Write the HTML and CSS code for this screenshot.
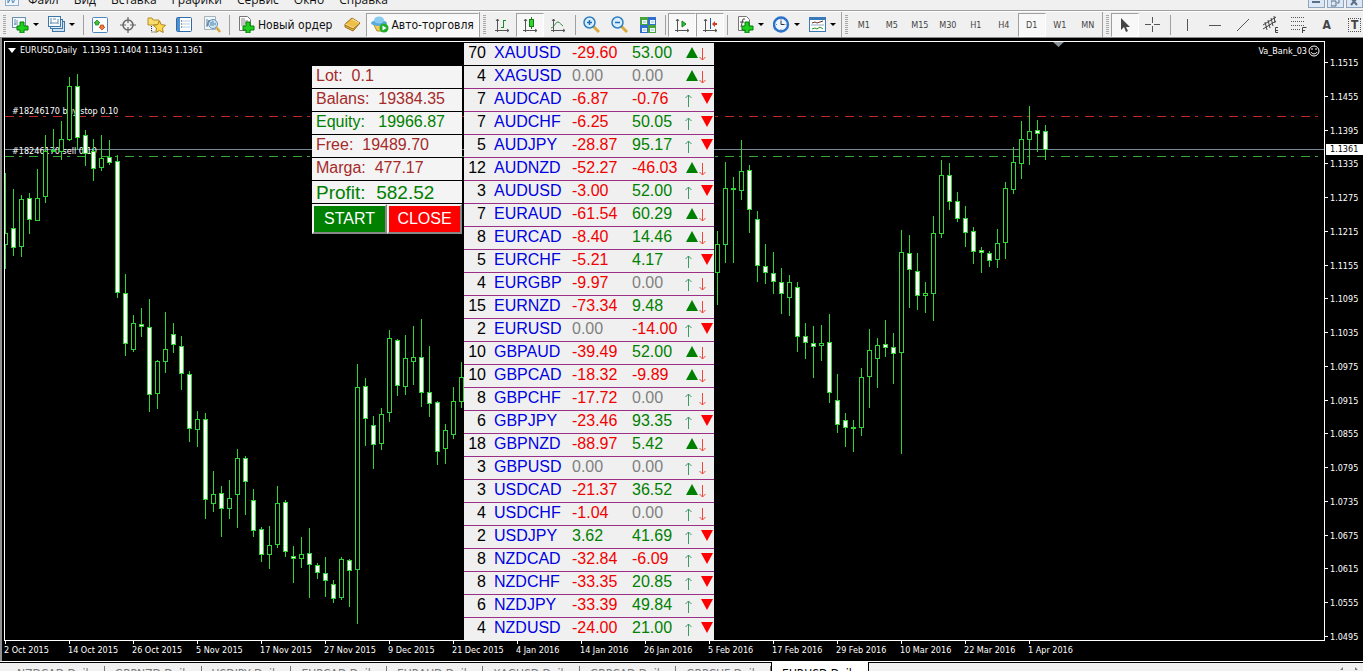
FILE: index.html
```html
<!DOCTYPE html>
<html lang="ru">
<head>
<meta charset="utf-8">
<title>EURUSD,Daily</title>
<link rel="stylesheet" href="styles.css">
</head>
<body>
<header class="menubar">
  <svg class="app-icon" width="14" height="12" viewBox="0 0 14 12"><rect x=".5" y=".5" width="13" height="11" fill="#eef5fc" stroke="#8fb0cf"/><path d="M3 3v6l3-5 2 5 3-6" fill="none" stroke="#4f86b8"/></svg>
  <nav class="menu">
    <button>Файл</button><button>Вид</button><button>Вставка</button><button>Графики</button><button>Сервис</button><button>Окно</button><button>Справка</button>
  </nav>
  <div class="win-buttons">
    <button aria-label="Свернуть"><svg width="9" height="8"><path d="M0 3h8" stroke="#5d6f86" stroke-width="2"/></svg></button>
    <button aria-label="Восстановить"><svg width="9" height="8"><path d="M3 0h5v4H6M0 2h5v5H0z" fill="none" stroke="#5d6f86"/></svg></button>
    <button aria-label="Закрыть"><svg width="9" height="8"><path d="M1-1l6 7M7-1L1 6" stroke="#5d6f86" stroke-width="2"/></svg></button>
  </div>
</header>

<div class="toolbar">
  <div class="group">
    <i class="grip"></i>
    <button class="tool drop" aria-label="Новый график"><svg width="17" height="17" viewBox="0 0 17 17"><rect x=".5" y="1.500" width="13" height="10" fill="#f4f9fd" stroke="#6a8ead"/><path d="M3 3v6M5 4v3M2 8h4" stroke="#6a8ead"/><path d="M8 6h4v4h4v4h-4v3H8v-3H5v-4h3z" fill="#1fd01f" stroke="#067a06"/></svg><i class="caret"></i></button>
    <button class="tool drop" aria-label="Профили"><svg width="17" height="17" viewBox="0 0 17 17"><rect x="4.500" y="5.500" width="12" height="10" fill="#cfe2f3" stroke="#3d76a8"/><rect x="2.500" y="3.500" width="12" height="9" fill="#dfecf8" stroke="#3d76a8"/><rect x=".5" y=".5" width="12" height="10" fill="#f7fbff" stroke="#3d76a8"/><path d="M3 2v6M2 7h8M10 3v5M5 3h3" stroke="#6a8ead"/></svg><i class="caret"></i></button>
    <i class="sep"></i>
    <button class="tool" aria-label="Обзор рынка"><svg width="16" height="16" viewBox="0 0 16 16"><rect x=".5" y=".5" width="15" height="15" rx="1" fill="#fff" stroke="#4a87bd"/><path d="M5 3l3 3H6.500v2h-3V6H2z" fill="#3ec43e" stroke="#118011" stroke-width=".7"/><path d="M10 13l3-3h-1.500V8h-3v2H7z" fill="#f08040" stroke="#b03a10" stroke-width=".7"/></svg></button>
    <button class="tool" aria-label="Окно данных"><svg width="16" height="16" viewBox="0 0 16 16"><circle cx="8" cy="8" r="5" fill="none" stroke="#666" stroke-width="1.500"/><path d="M8 0v6M8 10v6M0 8h6M10 8h6" stroke="#666" stroke-width="1.200"/></svg></button>
    <button class="tool" aria-label="Навигатор"><svg width="19" height="17" viewBox="0 0 19 17"><path d="M1 2h4l1 2h6v5H1z" fill="#f8dc6c" stroke="#b7922a"/><path d="M4.500 10v6h4" fill="none" stroke="#333" stroke-dasharray="1 1"/><path d="M12.500 5l1.800 3.700 4.200.5-3 3 .7 4.300-3.700-2-3.700 2 .7-4.300-3-3 4.200-.5z" fill="#ffd94a" stroke="#a9801f"/></svg></button>
    <button class="tool" aria-label="Терминал"><svg width="16" height="15" viewBox="0 0 16 15"><rect x=".5" y=".5" width="15" height="14" rx="1" fill="#fff" stroke="#2d6ba8"/><rect x="1" y="1" width="3" height="13" fill="#4d8fd1"/><path d="M6 4h8M6 7h8M6 10h8" stroke="#b8cde0"/><path d="M5 4h1M5 7h1M5 10h1" stroke="#234"/></svg></button>
    <button class="tool" aria-label="Тестер"><svg width="17" height="17" viewBox="0 0 17 17"><path d="M.5.5h11v13H.5z" fill="#f2f6f9" stroke="#a5b3bf"/><path d="M3 3v8M3 10l2-6 2 3 2-4" fill="none" stroke="#5e7f9b"/><circle cx="9" cy="8" r="4.500" fill="#cde6f7" fill-opacity=".8" stroke="#5a93bd"/><path d="M7 6v4M9 5v5M11 7v2" stroke="#4c7ca2"/><path d="M12.500 11.500L16 16" stroke="#d9a63a" stroke-width="2.500"/></svg></button>
    <i class="sep"></i>
    <button class="tool wide"><svg width="17" height="17" viewBox="0 0 17 17"><path d="M1.500.5h8l3 3v11h-11z" fill="#fff" stroke="#777"/><path d="M3 3h4M3 5h7M3 7h7M3 9h4" stroke="#888"/><path d="M8 6h4v4h4v4h-4v3H8v-3H5v-4h3z" fill="#1fd01f" stroke="#067a06"/></svg>Новый ордер</button>
    <button class="tool" aria-label="Редактор"><svg width="17" height="15" viewBox="0 0 17 15"><path d="M1 7l7-6 8 5-7 8-8-4z" fill="#eebf45" stroke="#9c6a10"/><path d="M1 7l8 4 7-5M8 2l7 4" fill="none" stroke="#fbe7a0"/><path d="M1 8l8 4 7-6" fill="none" stroke="#9c6a10"/></svg></button>
    <button class="tool wide auto pressed"><svg width="18" height="17" viewBox="0 0 18 17"><path d="M2 7h13l-4 8H6z" fill="#f3ce55" stroke="#b38b24"/><ellipse cx="8" cy="7" rx="8" ry="3" fill="#5aaade"/><ellipse cx="8" cy="4" rx="5" ry="3.500" fill="#8acbf0"/><circle cx="13" cy="12" r="4.500" fill="#1fae2c"/><path d="M11.500 9.500l4 2.500-4 2.500z" fill="#fff"/></svg>Авто-торговля</button>
  </div>
  <div class="group">
    <i class="grip"></i>
    <button class="tool" aria-label="Бары"><svg width="16" height="16" viewBox="0 0 16 16"><path d="M3.500 2v13M1 13.500h14M2 4l1.500-2L5 4M13 12l2 1.500-2 1.500" fill="none" stroke="#555"/><path d="M9.500 3v8M7 10.500h2M10 3.500h2" fill="none" stroke="#1c8a2c"/></svg></button>
    <button class="tool pressed" aria-label="Свечи"><svg width="16" height="16" viewBox="0 0 16 16"><path d="M3.500 2v13M1 13.500h14M2 4l1.500-2L5 4M13 12l2 1.500-2 1.500" fill="none" stroke="#555"/><path d="M9.500 0v12" stroke="#187a18"/><rect x="7.500" y="2.500" width="4" height="7" fill="#2fd72f" stroke="#187a18"/></svg></button>
    <button class="tool" aria-label="Линия"><svg width="16" height="16" viewBox="0 0 16 16"><path d="M3.500 2v13M1 13.500h14M2 4l1.500-2L5 4M13 12l2 1.500-2 1.500" fill="none" stroke="#555"/><path d="M1 11c4-1 4-6 7-6 2 0 3 3 5 4" fill="none" stroke="#2c8a3c"/></svg></button>
    <i class="sep"></i>
    <button class="tool" aria-label="Увеличить"><svg width="17" height="17" viewBox="0 0 17 17"><path d="M10 10l6 6" stroke="#d8ab3e" stroke-width="3"/><circle cx="6.500" cy="6.500" r="5.500" fill="#d9efff" stroke="#2f7fc0" stroke-width="1.500"/><path d="M4 6.500h5M6.500 4v5" stroke="#1f6bb0" stroke-width="1.500"/></svg></button>
    <button class="tool" aria-label="Уменьшить"><svg width="17" height="17" viewBox="0 0 17 17"><path d="M10 10l6 6" stroke="#d8ab3e" stroke-width="3"/><circle cx="6.500" cy="6.500" r="5.500" fill="#d9efff" stroke="#2f7fc0" stroke-width="1.500"/><path d="M4 6.500h5" stroke="#1f6bb0" stroke-width="1.500"/></svg></button>
    <button class="tool" aria-label="Окна"><svg width="16" height="16" viewBox="0 0 16 16"><path d="M0 0h8v8H0zM8 8h8v8H8z" fill="#49a33b"/><path d="M8 0h8v8H8zM0 8h8v8H0z" fill="#2f6fd0"/><path d="M2 3h5v4H2zM10 3h5v4h-5zM2 11h5v4H2zM10 11h5v4h-5z" fill="#eef6ff"/><path d="M3 5h3M11 5h3M3 13h3M11 13h3" stroke="#9bb"/></svg></button>
    <i class="sep"></i>
    <button class="tool pressed" aria-label="Автопрокрутка"><svg width="16" height="16" viewBox="0 0 16 16"><path d="M3.500 2v13M1 13.500h14M2 4l1.500-2L5 4M13 12l2 1.500-2 1.500" fill="none" stroke="#555"/><path d="M8 4l4 3-4 3z" fill="#2fc72f" stroke="#187a18"/></svg></button>
    <button class="tool pressed" aria-label="Сдвиг графика"><svg width="16" height="16" viewBox="0 0 16 16"><path d="M3.500 2v13M1 13.500h14M2 4l1.500-2L5 4M13 12l2 1.500-2 1.500" fill="none" stroke="#555"/><path d="M8.500 1v11" stroke="#225a9a"/><path d="M10 7l3-3v2h2v2h-2v2z" fill="#d33a1c"/></svg></button>
    <i class="sep"></i>
    <button class="tool drop inset" aria-label="Индикаторы"><svg width="17" height="17" viewBox="0 0 17 17"><path d="M1.500.5h8l3 3v11h-11z" fill="#fff" stroke="#777"/><path d="M8 3H6L4 11M3 6h4M8 6l2 3" fill="none" stroke="#444"/><path d="M8 6h4v4h4v4h-4v3H8v-3H5v-4h3z" fill="#1fd01f" stroke="#067a06"/></svg><i class="caret"></i></button>
    <button class="tool drop" aria-label="Периоды"><svg width="17" height="17" viewBox="0 0 17 17"><circle cx="8" cy="8.500" r="7" fill="#eef7ff" stroke="#2c72c8" stroke-width="2.400"/><path d="M8 4.500v4h3.500" fill="none" stroke="#333"/><path d="M8 3v1M8 13v1M3 8.500h1M12.500 8.500h1" stroke="#68a"/></svg><i class="caret"></i></button>
    <button class="tool drop" aria-label="Шаблоны"><svg width="17" height="16" viewBox="0 0 17 16"><rect x=".5" y=".5" width="16" height="14" fill="#fff" stroke="#3a7ab8"/><path d="M1 2h15" stroke="#3a7ab8" stroke-width="2"/><path d="M2 8h13" stroke="#9ab"/><path d="M3 6l3-1 2 1 3-1 3-1" fill="none" stroke="#633"/><path d="M3 12l3-1 2 1 3-2 3 2" fill="none" stroke="#292"/></svg><i class="caret"></i></button>
  </div>
  <div class="group">
    <i class="grip"></i>
    <button class="tool">M1</button><button class="tool">M5</button><button class="tool">M15</button><button class="tool">M30</button><button class="tool">H1</button><button class="tool">H4</button><button class="tool pressed">D1</button><button class="tool">W1</button><button class="tool">MN</button>
  </div>
  <div class="group last">
    <i class="grip"></i>
    <button class="tool pressed" aria-label="Курсор"><svg width="16" height="16" viewBox="0 0 16 16"><path d="M4 1v12l3-3 2 5 2-1-2-4h4z" fill="#444"/></svg></button>
    <button class="tool" aria-label="Перекрестие"><svg width="16" height="16" viewBox="0 0 16 16"><path d="M7.500 0v6M7.500 9v6M0 7.500h6M9 7.500h6" stroke="#555"/></svg></button>
    <i class="sep"></i>
    <button class="tool" aria-label="Вертикальная линия"><svg width="16" height="16" viewBox="0 0 16 16"><path d="M8.500 2v12" stroke="#555"/></svg></button>
    <button class="tool" aria-label="Горизонтальная линия"><svg width="16" height="16" viewBox="0 0 16 16"><path d="M2 8.500h12" stroke="#555"/></svg></button>
    <button class="tool" aria-label="Трендовая линия"><svg width="16" height="16" viewBox="0 0 16 16"><path d="M2 14L14 2" stroke="#555"/></svg></button>
    <button class="tool" aria-label="Канал"><svg width="18" height="18" viewBox="0 0 18 18"><path d="M1 9L14 1M1 13L14 5M3 6l2 8M6 4l2 8M9 2l2 8M12 0l1 7" stroke="#444"/><path d="M16 11.500h-2.500v5H16M13 14.500h3" fill="none" stroke="#444"/></svg></button>
    <button class="tool" aria-label="Фибоначчи"><svg width="18" height="18" viewBox="0 0 18 18"><path d="M1 1.500h14M1 5.500h14M1 9.500h14M1 13.500h9" stroke="#555" stroke-dasharray="1 1"/><path d="M12.500 17v-5.500h4M12 14.500h3" fill="none" stroke="#444"/></svg></button>
    <button class="tool letter">A</button>
    <button class="tool letter boxed"><span>T</span></button>
  </div>
</div>

<main class="chart">
  <section class="plot">
    <svg class="candles" id="candles" width="100%" height="100%" aria-label="EURUSD"></svg>
    <h1 class="symbol"><svg width="8" height="5"><path d="M0 0h8L4 5z" fill="#fff"/></svg>EURUSD,Daily&nbsp; 1.1393 1.1404 1.1343 1.1361</h1>
    <div class="expert">Va_Bank_03<svg width="12" height="12" viewBox="0 0 12 12"><circle cx="6" cy="6" r="5" fill="none" stroke="#fff"/><path d="M4 3v2M8 3v2M3 7c1 2.500 5 2.500 6 0" fill="none" stroke="#fff"/></svg></div>
    <div class="account">
      <p>Lot:  0.1</p>
      <p>Balans:  19384.35</p>
      <p class="up">Equity:   19966.87</p>
      <p>Free:  19489.70</p>
      <p>Marga:  477.17</p>
      <p class="up profit">Profit:  582.52</p>
      <div class="actions"><button class="start">START</button><button class="close">CLOSE</button></div>
    </div>
    <table class="pairs"><tbody id="pairs"></tbody></table>
  </section>
  <aside class="prices" id="prices"><output class="current">1.1361</output></aside>
  <div class="dates" id="dates"></div>
</main>

<footer class="tabs">
  <button>NZDCAD,Daily</button><button>GBPNZD,Daily</button><button>USDJPY,Daily</button><button>EURCAD,Daily</button><button>EURAUD,Daily</button><button>XAGUSD,Daily</button><button>GBPCAD,Daily</button><button>GBPCHF,Daily</button><button class="active">EURUSD,Daily</button>
  <svg class="scroll" width="28" height="8"><path d="M8 5v3l-3 0zM20 5v3h3z" fill="#777"/></svg>
</footer>
<script src="script.js"></script>
</body>
</html>
```
FILE: styles.css
```css
* { box-sizing: border-box; }
body {
  margin: 0;
  height: 100vh;
  display: flex;
  flex-direction: column;
  overflow: hidden;
  background: #f0f0f0;
  font-family: "DejaVu Sans Condensed", "DejaVu Sans", sans-serif;
  font-size: 9px;
}
button {
  margin: 0;
  padding: 0;
  border: 0;
  background: none;
  font: inherit;
  color: inherit;
}
svg { display: block; flex: none; }

/* menu */
.menubar {
  height: 11px;
  display: flex;
  align-items: flex-end;
  overflow: hidden;
  border-bottom: 1px solid #a0a0a0;
  font-family: "Open Sans", sans-serif;
  font-size: 12px;
  line-height: 16px;
  color: #111;
}
.app-icon { margin: 0 9px 4px 5px; }
.menu {
  display: flex;
  gap: 15px;
  padding-bottom: 2px;
}
.win-buttons {
  display: flex;
  gap: 2px;
  margin-left: auto;
  padding-bottom: 2px;
}
.win-buttons button {
  width: 17px;
  height: 14px;
  display: flex;
  justify-content: center;
  align-items: flex-end;
  border: 1px solid #8ea3bd;
  background: #dce8f5;
}

/* toolbar */
.toolbar {
  height: 27px;
  flex: none;
  display: flex;
  border-top: 1px solid #fff;
  border-bottom: 1px solid #8a8a8a;
  color: #444;
}
.group {
  flex: none;
  display: flex;
  align-items: center;
  border-right: 1px solid #a0a0a0;
}
.group.last { border-right: 0; }
.grip {
  width: 3px;
  height: 20px;
  margin: 0 2px 0 3px;
  background: repeating-linear-gradient(#a8a8a8 0 1px, #f0f0f0 1px 2px);
}
.sep {
  width: 1px;
  height: 20px;
  margin: 0 2px 0 3px;
  background: #a0a0a0;
}
.tool {
  width: 28px;
  height: 24px;
  display: flex;
  align-items: center;
  justify-content: center;
  border: 1px solid transparent;
}
.tool.drop {
  width: 36px;
  justify-content: flex-start;
  gap: 4px;
  padding-left: 3px;
}
.tool.inset { margin-left: 3px; }
.tool.wide {
  width: auto;
  gap: 3px;
  padding: 0 5px;
  font-size: 12px;
  color: #111;
}
.tool.auto {
  gap: 2px;
  padding: 0 4px;
}
.tool.pressed {
  border-color: #a0a0a0 #fff #fff #a0a0a0;
  background: #f8f8f8;
}
.caret {
  border: 3px solid transparent;
  border-top-color: #000;
  border-bottom: 0;
}
.letter { font-size: 12px; font-weight: bold; }
.boxed span {
  padding: 0 2px;
  border: 1px dotted #555;
  line-height: 12px;
}

/* chart window */
.chart {
  flex: 1;
  min-height: 0;
  display: grid;
  grid-template-columns: 1fr 38px;
  grid-template-rows: 1fr 20px;
  padding-top: 3px;
  border-left: 2px solid #909090;
  padding-left: 2px;
  background: #000;
  color: #fff;
}
.plot {
  position: relative;
  border: 1px solid #fff;
  overflow: hidden;
}
.candles text { font-size: 9px; fill: #fff; }
.symbol {
  position: absolute;
  left: 3px;
  top: 2px;
  margin: 0;
  display: flex;
  align-items: center;
  gap: 4px;
  font-size: 9px;
  font-weight: normal;
  line-height: 12px;
}
.expert {
  position: absolute;
  right: 4px;
  top: 3px;
  display: flex;
  align-items: center;
  gap: 1px;
  line-height: 12px;
}

/* account panel */
.account {
  position: absolute;
  left: 307px;
  top: 24px;
  width: 150px;
  font: 16px/20px "Liberation Sans", Arial, sans-serif;
  color: #a52a2a;
}
.account p {
  height: 23px;
  margin: 0;
  padding-left: 4px;
  border-bottom: 1px solid #000;
  background: #f4f4f4;
  white-space: pre;
}
.account .up { color: #008000; }
.account .profit { font-size: 19px; line-height: 24px; }
.actions { display: flex; }
.actions button {
  flex: 1;
  height: 30px;
  border: 2px solid;
  border-color: #f4f4f4 #888 #888 #f4f4f4;
  color: #fff;
}
.start { background: #008000; }
.close { background: #f00; }

/* currency pairs */
.pairs {
  position: absolute;
  left: 459px;
  top: 1px;
  width: 250px;
  table-layout: fixed;
  border-collapse: separate;
  border-spacing: 0;
  background: #f0f0f0;
  font: 16px/20px "Liberation Sans", Arial, sans-serif;
}
.pairs td {
  height: 23px;
  padding: 0;
  vertical-align: top;
  border-bottom: 1px solid #9b2f86;
  color: #808080;
}
.pairs tr:first-child td { border-bottom-color: #000; }
.pairs tr:last-child td { border-bottom: 0; }
.pairs .count { width: 22px; text-align: right; color: #000; }
.pairs .name { width: 86px; padding-left: 8px; color: #0000e0; }
.pairs .value { width: 60px; }
.pairs .trend { width: 30px; }
.pairs .value + .value { width: 52px; }
.pairs .plus { color: #008000; }
.pairs .minus { color: #f00000; }

/* scales */
.prices {
  position: relative;
  display: flex;
  flex-direction: column;
  justify-content: space-between;
  padding-top: 18px;
  line-height: 8px;
}
.prices span::before {
  content: "";
  display: inline-block;
  width: 3px;
  height: 1px;
  margin-right: 2px;
  background: #fff;
  vertical-align: 3px;
}
.current {
  position: absolute;
  top: 103px;
  left: 1px;
  right: 0;
  padding-left: 4px;
  line-height: 11px;
  background: #fff;
  color: #000;
}
.dates {
  grid-column: 1 / -1;
  display: flex;
  line-height: 18px;
  overflow: hidden;
}
.dates span {
  position: relative;
  flex: none;
  width: 64px;
  white-space: nowrap;
}
.dates span::before {
  content: "";
  position: absolute;
  left: 1px;
  top: 0;
  width: 1px;
  height: 3px;
  background: #fff;
}

/* chart tabs */
.tabs {
  height: 10px;
  flex: none;
  display: flex;
  overflow: hidden;
  padding-left: 7px;
  border-top: 1px solid #fff;
  box-shadow: inset 0 1px #000;
  font-size: 12px;
  line-height: 16px;
  color: #777;
}
.tabs button {
  position: relative;
  flex: none;
  height: 20px;
  padding: 3px 10px 0;
}
.tabs button:not(.active)::after {
  content: "";
  position: absolute;
  right: 0;
  top: 4px;
  width: 1px;
  height: 14px;
  background: #777;
}
.tabs .active {
  border: 1px solid #000;
  border-width: 0 1px;
  background: #fff;
  color: #000;
}
.scroll { margin-left: auto; }
```
FILE: script.js
```js
// Candle: [high, body top, body bottom, low, filled]; one every 8px
const left = [
  [173,233,245,269,0],[189,228,248,256,1],[195,199,247,257,0],[193,198,220,234,1],[169,198,221,221,0],
  [135,151,197,203,0],[129,150,152,152,1],[121,139,152,160,0],[77,86,140,141,0],[74,86,138,150,1],
  [130,135,154,166,1],[139,151,169,181,1],[135,158,168,171,0],[140,157,163,165,1],[155,161,293,298,1],
  [274,293,344,356,1],[315,323,350,352,0],[308,324,327,337,1],[299,327,395,412,1],[360,361,394,409,0],
  [312,349,362,373,0],[323,334,345,353,1],[336,346,374,390,1],[371,374,429,442,1],[411,419,430,447,0],
  [413,419,500,519,1],[471,494,504,512,0],[486,493,509,537,1],[480,498,509,519,0],[449,458,495,528,0],
  [456,458,482,515,1],[489,500,531,537,1],[527,529,555,562,1],[526,545,555,569,0],[486,503,545,548,0],
  [500,502,552,557,1],[546,556,559,583,1],[537,554,559,568,0],[528,553,565,598,1],[563,565,573,579,1],
  [557,573,581,597,1],[580,584,599,603,1],[557,559,598,600,0],[559,560,571,607,1],[364,387,570,624,0],
  [378,386,419,446,1],[416,425,445,469,1],[408,414,444,450,0],[330,338,413,422,0],[339,340,386,396,1],
  [335,358,387,395,0],[326,357,362,385,0],[319,357,393,407,1],[346,392,404,417,1],[401,402,452,465,1],
  [424,430,449,464,0],[387,401,435,439,0],[362,377,402,408,0]
];
const right = [
  [231,244,273,305,0],[162,188,245,263,0],[177,188,190,263,1],[140,171,191,200,0],[165,170,210,233,1],
  [211,219,266,282,1],[244,266,273,284,1],[252,273,282,294,1],[268,282,294,314,1],[275,282,298,316,0],
  [282,287,337,352,1],[323,336,343,359,1],[326,343,347,378,1],[325,343,346,361,0],[314,342,393,403,1],
  [374,400,425,433,1],[413,420,428,447,1],[420,427,429,452,1],[368,377,428,436,0],[329,350,377,408,0],
  [338,345,359,388,0],[320,344,348,357,1],[333,347,354,384,1],[230,252,353,454,0],[235,253,270,308,1],
  [253,271,296,310,1],[282,293,296,313,0],[216,233,294,321,0],[160,175,234,238,0],[163,175,202,210,1],
  [192,201,219,222,1],[206,218,233,247,1],[227,231,252,264,1],[247,250,253,273,1],[251,253,261,267,1],
  [229,243,260,268,0],[182,188,243,259,0],[147,162,190,194,0],[121,139,164,179,0],[106,131,140,165,0],
  [120,130,134,152,1],[125,131,150,160,1]
];
const ox = 5, oy = 42;
const candle = (x, [hi, top, bot, lo, filled]) => {
  const c = x - ox, t = top - oy, h = Math.max(bot - top - 1, 1);
  return `<path d="M${c + 0.5} ${hi - oy}V${lo - oy}" stroke="#32d632"/>` +
    `<rect x="${c - 1.5}" y="${t + 0.5}" width="4" height="${h}" fill="${filled ? '#fff' : '#000'}" stroke="#32d632"/>`;
};
const level = (y, color, dash) =>
  `<line x1="0" x2="100%" y1="${y - oy + 0.5}" y2="${y - oy + 0.5}" stroke="${color}" stroke-dasharray="${dash}"/>`;
document.getElementById('candles').innerHTML =
  level(116, '#c02828', '9 5 3 7') + level(156, '#3a3', '9 5 3 7') + level(149, '#778899', 'none') +
  '<text x="7" y="72">#18246170 buy stop 0.10</text><text x="7" y="112">#18246170 sell 0.10</text>' +
  left.map((c, i) => candle(5 + 8 * i, c)).join('') +
  right.map((c, i) => candle(717 + 8 * i, c)).join('') +
  '<path d="M1048 0h11l-5.500 5z" fill="#8a9299"/>';

// Pair: count, name, first value, second value, strong up, strong down
const pairs = `70 XAUUSD -29.60 53.00 1 0
4 XAGUSD 0.00 0.00 1 0
7 AUDCAD -6.87 -0.76 0 1
7 AUDCHF -6.25 50.05 0 1
5 AUDJPY -28.87 95.17 0 1
12 AUDNZD -52.27 -46.03 1 0
3 AUDUSD -3.00 52.00 0 1
7 EURAUD -61.54 60.29 1 0
8 EURCAD -8.40 14.46 1 0
5 EURCHF -5.21 4.17 0 1
4 EURGBP -9.97 0.00 0 0
15 EURNZD -73.34 9.48 1 0
2 EURUSD 0.00 -14.00 0 1
10 GBPAUD -39.49 52.00 1 0
10 GBPCAD -18.32 -9.89 1 0
8 GBPCHF -17.72 0.00 0 0
6 GBPJPY -23.46 93.35 0 1
18 GBPNZD -88.97 5.42 1 0
3 GBPUSD 0.00 0.00 0 0
3 USDCAD -21.37 36.52 1 0
4 USDCHF -1.04 0.00 0 0
2 USDJPY 3.62 41.69 0 1
8 NZDCAD -32.84 -6.09 0 1
8 NZDCHF -33.35 20.85 0 1
6 NZDJPY -33.39 49.84 0 1
4 NZDUSD -24.00 21.00 0 1`.split('\n').map(r => r.split(' '));
const value = v => `<td class="value ${v > 0 ? 'plus' : v < 0 ? 'minus' : ''}">${v}</td>`;
const arrows = (up, down) => '<td class="trend"><svg width="30" height="20">' +
  (up === '1' ? '<path d="M2 15h12L8 4z" fill="#008000"/>'
    : '<path d="M4.500 18V6M1.500 9l3-3 3 3" fill="none" stroke="#3a9a62"/>') +
  (down === '1' ? '<path d="M17 4h12l-6 11z" fill="#f00"/>'
    : '<path d="M18.500 5v12M15.500 14l3 3 3-3" fill="none" stroke="#f0463a"/>') + '</svg></td>';
document.getElementById('pairs').innerHTML = pairs.map(([n, name, a, b, up, down]) =>
  `<tr><td class="count">${n}</td><td class="name">${name}</td>${value(a)}${value(b)}${arrows(up, down)}</tr>`).join('');

const prices = [];
for (let p = 11515; p >= 10495; p -= 60) prices.push(`<span>${(p / 10000).toFixed(4)}</span>`);
document.getElementById('prices').insertAdjacentHTML('afterbegin', prices.join(''));

document.getElementById('dates').innerHTML = ['2 Oct 2015', '14 Oct 2015', '26 Oct 2015', '5 Nov 2015',
  '17 Nov 2015', '27 Nov 2015', '9 Dec 2015', '21 Dec 2015', '4 Jan 2016', '14 Jan 2016', '26 Jan 2016',
  '5 Feb 2016', '17 Feb 2016', '29 Feb 2016', '10 Mar 2016', '22 Mar 2016', '1 Apr 2016']
  .map(d => `<span>${d}</span>`).join('');
```
